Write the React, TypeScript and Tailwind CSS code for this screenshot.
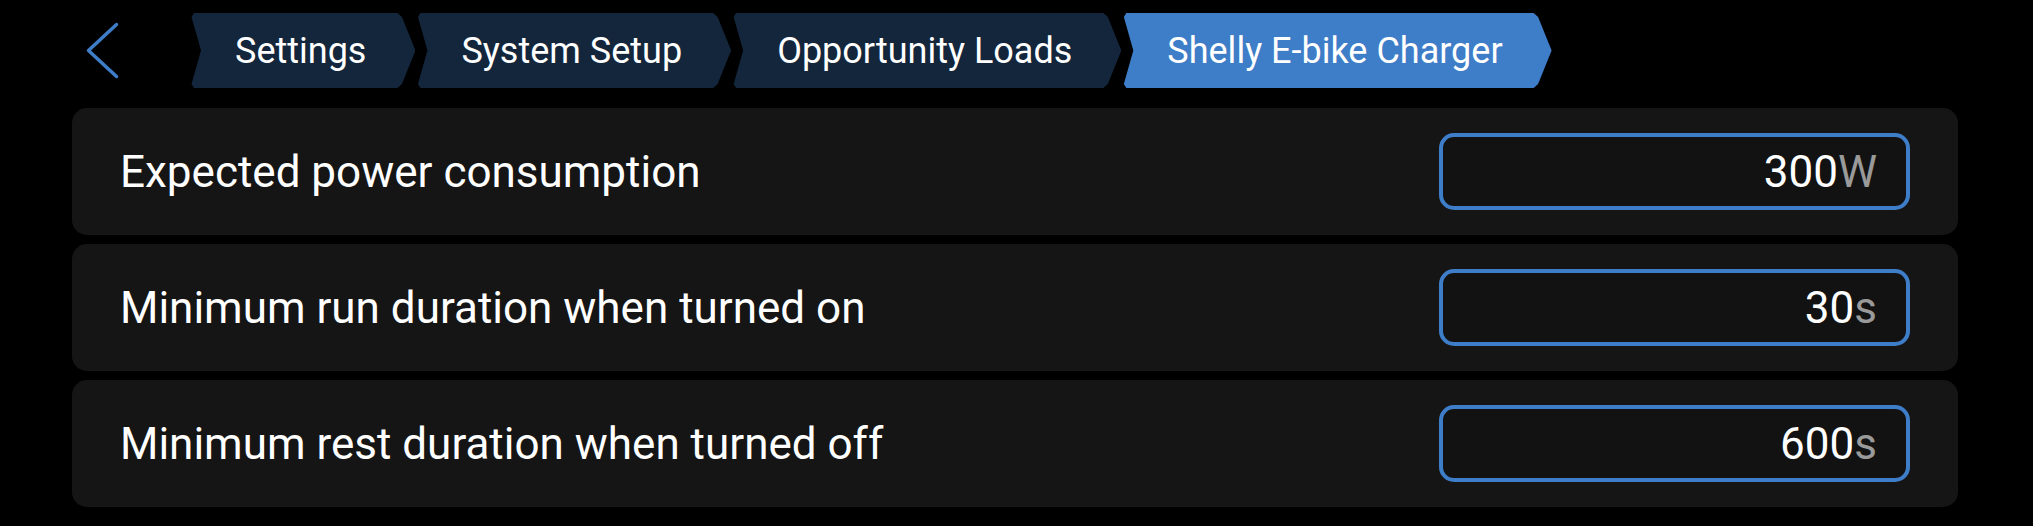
import { ChangeEvent, useState } from "react";

interface ICrumb {
    label: string;
    active?: boolean;
}

interface ISetting {
    id: string;
    label: string;
    value: string;
    unit: string;
}

const CRUMBS: ICrumb[] = [
    { label: "Settings" },
    { label: "System Setup" },
    { label: "Opportunity Loads" },
    { label: "Shelly E-bike Charger", active: true },
];

const SETTINGS: ISetting[] = [
    { id: "power", label: "Expected power consumption", value: "300", unit: "W" },
    { id: "run", label: "Minimum run duration when turned on", value: "30", unit: "s" },
    { id: "rest", label: "Minimum rest duration when turned off", value: "600", unit: "s" },
];

const BackButton = () => (
    <button className="shrink-0 w-[33px] h-[75px] flex items-center">
        <svg width="33" height="57" viewBox="0 0 33 57" fill="none">
            <path d="M30.5 2.5 L2.5 28.5 L30.5 54.5" stroke="#3e7dc7" strokeWidth="3.5" strokeLinecap="round" strokeLinejoin="round" />
        </svg>
    </button>
);

// chevron-shaped crumb, corners clipped a little so they read as rounded
const Crumb = ({ label, active }: ICrumb) => (
    <div
        className={`h-[75px] flex items-center pl-[45px] pr-[49px] text-[36px] text-white whitespace-nowrap [clip-path:polygon(4px_0,calc(100%_-_18px)_0,calc(100%_-_13.5px)_4px,100%_50%,calc(100%_-_13.5px)_calc(100%_-_4px),calc(100%_-_18px)_100%,4px_100%,1.5px_calc(100%_-_4px),11px_50%,1.5px_4px)] ${active ? "bg-[#3e7dc7]" : "bg-[#13263c]"}`}
    >
        {label}
    </div>
);

const SettingRow = ({ setting, onChange }: { setting: ISetting; onChange: (id: string, value: string) => void }) => (
    <div className="h-[127px] rounded-[15px] bg-[#151515] flex items-center justify-between pl-[48px] pr-[48px]">
        <div className="text-[44px] text-white whitespace-nowrap">{setting.label}</div>
        <label className="w-[471px] h-[77px] border-4 border-[#3e7dc7] rounded-[15px] bg-[#121212] flex items-center justify-end pr-[29px] text-[44px] cursor-text">
            <input
                className="bg-transparent outline-none text-white text-right w-[300px]"
                value={setting.value}
                size={setting.value.length}
                onChange={({ target }: ChangeEvent<HTMLInputElement>) => onChange(setting.id, target.value)}
            />
            <span className="text-[#9a9a9a]">{setting.unit}</span>
        </label>
    </div>
);

const App = () => {
    const [settings, setSettings] = useState(SETTINGS);

    const setValue = (id: string, value: string) => {
        setSettings(settings.map((s) => (s.id === id ? { ...s, value } : s)));
    };

    return (
        <div className="w-full min-h-screen bg-black font-['Roboto',sans-serif]">
            <div className="flex items-center pt-[13px] pl-[86px]">
                <BackButton />
                <div className="flex gap-[1px] ml-[71px]">
                    {CRUMBS.map((crumb) => <Crumb key={crumb.label} {...crumb} />)}
                </div>
            </div>
            <div className="flex flex-col gap-[9px] mt-[20px] ml-[72px] mr-[75px]">
                {settings.map((setting) => <SettingRow key={setting.id} setting={setting} onChange={setValue} />)}
            </div>
        </div>
    );
};

export default App;
